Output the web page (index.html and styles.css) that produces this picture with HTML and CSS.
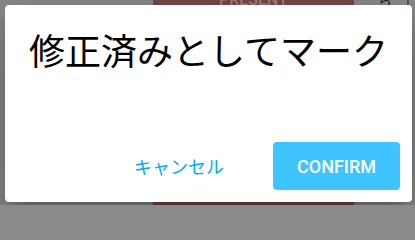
FILE: index.html
```html
<!DOCTYPE html>
<html lang="ja">
<head>
<meta charset="utf-8">
<link rel="stylesheet" href="styles.css">
</head>
<body>
<div class="page">
  <div class="present">PRESENT</div>
  <div class="corner-tools"><span class="tool-glyph">ら</span><span class="tool-bar">|</span></div>
</div>
<div class="dialog" role="dialog">
  <h2 class="dialog-title">修正済みとしてマーク</h2>
  <div class="dialog-actions">
    <button class="btn btn-cancel">キャンセル</button>
    <button class="btn btn-confirm">CONFIRM</button>
  </div>
</div>
</body>
</html>
```
FILE: styles.css
```css
html, body {
  margin: 0;
  padding: 0;
  width: 415px;
  height: 205px;
  overflow: hidden;
}
body {
  background: #8a8a8a;
  font-family: "Noto Sans CJK JP", "Noto Sans", sans-serif;
  position: relative;
}
.page {
  display: flex;
  align-items: flex-start;
  height: 205px;
}
.present {
  margin-left: 153px;
  width: 201px;
  height: 205px;
  background: #7a4747;
  color: #a08080;
  font-family: Roboto, sans-serif;
  font-weight: 500;
  font-size: 16px;
  line-height: 16px;
  margin-top: 0;
  text-align: center;
  box-sizing: border-box;
  padding-top: 0;
  text-indent: 0;
}
.present {
  line-height: 0;
}
.corner-tools {
  margin-left: 24px;
  display: flex;
  gap: 14px;
  font-family: "Noto Sans CJK JP", sans-serif;
  font-size: 14px;
  line-height: 0;
  color: #222;
}
.dialog {
  position: absolute;
  left: 5px;
  top: 5px;
  width: 407px;
  height: 197px;
  box-sizing: border-box;
  background: #fff;
  border-radius: 4px;
  box-shadow: 0 11px 15px -7px rgba(0,0,0,.2), 0 24px 38px 3px rgba(0,0,0,.14), 0 9px 46px 8px rgba(0,0,0,.12);
  display: flex;
  flex-direction: column;
}
.dialog-title {
  margin: 0;
  padding: 26px 24px 0 24px;
  font-size: 36px;
  line-height: 36px;
  font-weight: 400;
  color: #000;
  white-space: nowrap;
}
.dialog-actions {
  margin-top: auto;
  display: flex;
  justify-content: flex-end;
  align-items: center;
  padding: 0 12px 12px 0;
}
.btn {
  border: none;
  background: none;
  padding: 0;
  cursor: pointer;
  font-size: 18px;
}
.btn-cancel {
  font-family: "Noto Sans CJK JP", sans-serif;
  color: #03a9f4;
  padding: 0 16px;
  margin-right: 33px;
  height: 48px;
  line-height: 48px;
}
.btn-confirm {
  width: 127px;
  height: 48px;
  border-radius: 4px;
  background: #40c4ff;
  color: #fff;
  font-family: Roboto, sans-serif;
  font-weight: 500;
  letter-spacing: 0;
}
```
